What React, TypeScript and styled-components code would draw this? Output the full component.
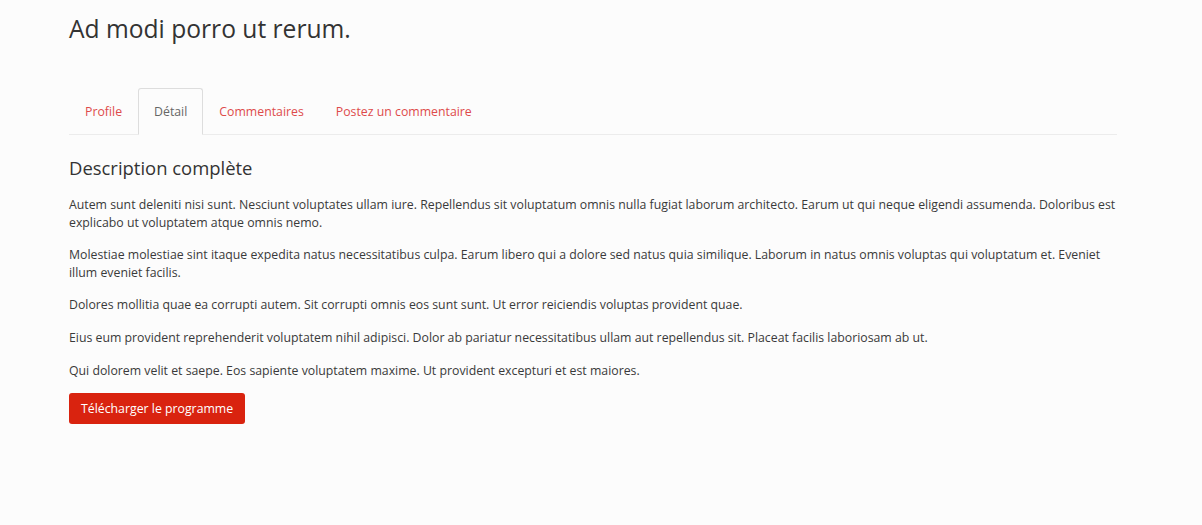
import React from "react";
import styled, { createGlobalStyle } from "styled-components";

const Global = createGlobalStyle`
  html, body { margin: 0; padding: 0; background: #fcfcfc; }
  body { font-family: "Open Sans", "DejaVu Sans", sans-serif; color: #3a3a3a; font-size: 12.3px; line-height: 17.6px; }
  * { box-sizing: border-box; }
`;

const Page = styled.div`
  width: 1048px;
  margin-left: 69px;
  padding-top: 12px;
`;

const Title = styled.h1`
  margin: 0 0 42px 0;
  font-size: 24.6px;
  line-height: 34px;
  font-weight: 400;
  color: #333;
`;

const Tabs = styled.ul`
  display: flex;
  list-style: none;
  margin: 0;
  padding: 0;
  border-bottom: 1px solid #ececec;
`;

const Tab = styled.li<{ $active?: boolean }>`
  margin-bottom: -1px;
  padding: 0 15px;
  height: 47px;
  display: flex;
  align-items: center;
  font-size: 12.3px;
  color: ${(p) => (p.$active ? "#666" : "#de4b4b")};
  border: 1px solid ${(p) => (p.$active ? "#ddd" : "transparent")};
  border-bottom-color: ${(p) => (p.$active ? "#fcfcfc" : "transparent")};
  border-radius: 3px 3px 0 0;
  background: ${(p) => (p.$active ? "#fcfcfc" : "transparent")};
  cursor: pointer;
`;

const Section = styled.div`
  padding-top: 20px;
`;

const Heading = styled.h3`
  margin: 0 0 15px 0;
  font-size: 18.45px;
  line-height: 26px;
  font-weight: 400;
  color: #333;
`;

const Para = styled.p`
  margin: 0 0 15px 0;
  font-size: 12.3px;
  line-height: 17.6px;
  color: #3a3a3a;
`;

const Button = styled.button`
  margin-top: -1px;
  height: 31px;
  padding: 0 12px;
  border: none;
  border-radius: 3px;
  background: #d9230f;
  color: #fff;
  font-family: "Open Sans", "DejaVu Sans", sans-serif;
  font-size: 12.3px;
  cursor: pointer;
`;

const paragraphs = [
  "Autem sunt deleniti nisi sunt. Nesciunt voluptates ullam iure. Repellendus sit voluptatum omnis nulla fugiat laborum architecto. Earum ut qui neque eligendi assumenda. Doloribus est explicabo ut voluptatem atque omnis nemo.",
  "Molestiae molestiae sint itaque expedita natus necessitatibus culpa. Earum libero qui a dolore sed natus quia similique. Laborum in natus omnis voluptas qui voluptatum et. Eveniet illum eveniet facilis.",
  "Dolores mollitia quae ea corrupti autem. Sit corrupti omnis eos sunt sunt. Ut error reiciendis voluptas provident quae.",
  "Eius eum provident reprehenderit voluptatem nihil adipisci. Dolor ab pariatur necessitatibus ullam aut repellendus sit. Placeat facilis laboriosam ab ut.",
  "Qui dolorem velit et saepe. Eos sapiente voluptatem maxime. Ut provident excepturi et est maiores.",
];

export default function App() {
  return (
    <>
      <Global />
      <Page>
        <Title>Ad modi porro ut rerum.</Title>
        <Tabs>
          <Tab>Profile</Tab>
          <Tab $active>Détail</Tab>
          <Tab>Commentaires</Tab>
          <Tab>Postez un commentaire</Tab>
        </Tabs>
        <Section>
          <Heading>Description complète</Heading>
          {paragraphs.map((t, i) => (
            <Para key={i}>{t}</Para>
          ))}
          <Button>Télécharger le programme</Button>
        </Section>
      </Page>
    </>
  );
}
